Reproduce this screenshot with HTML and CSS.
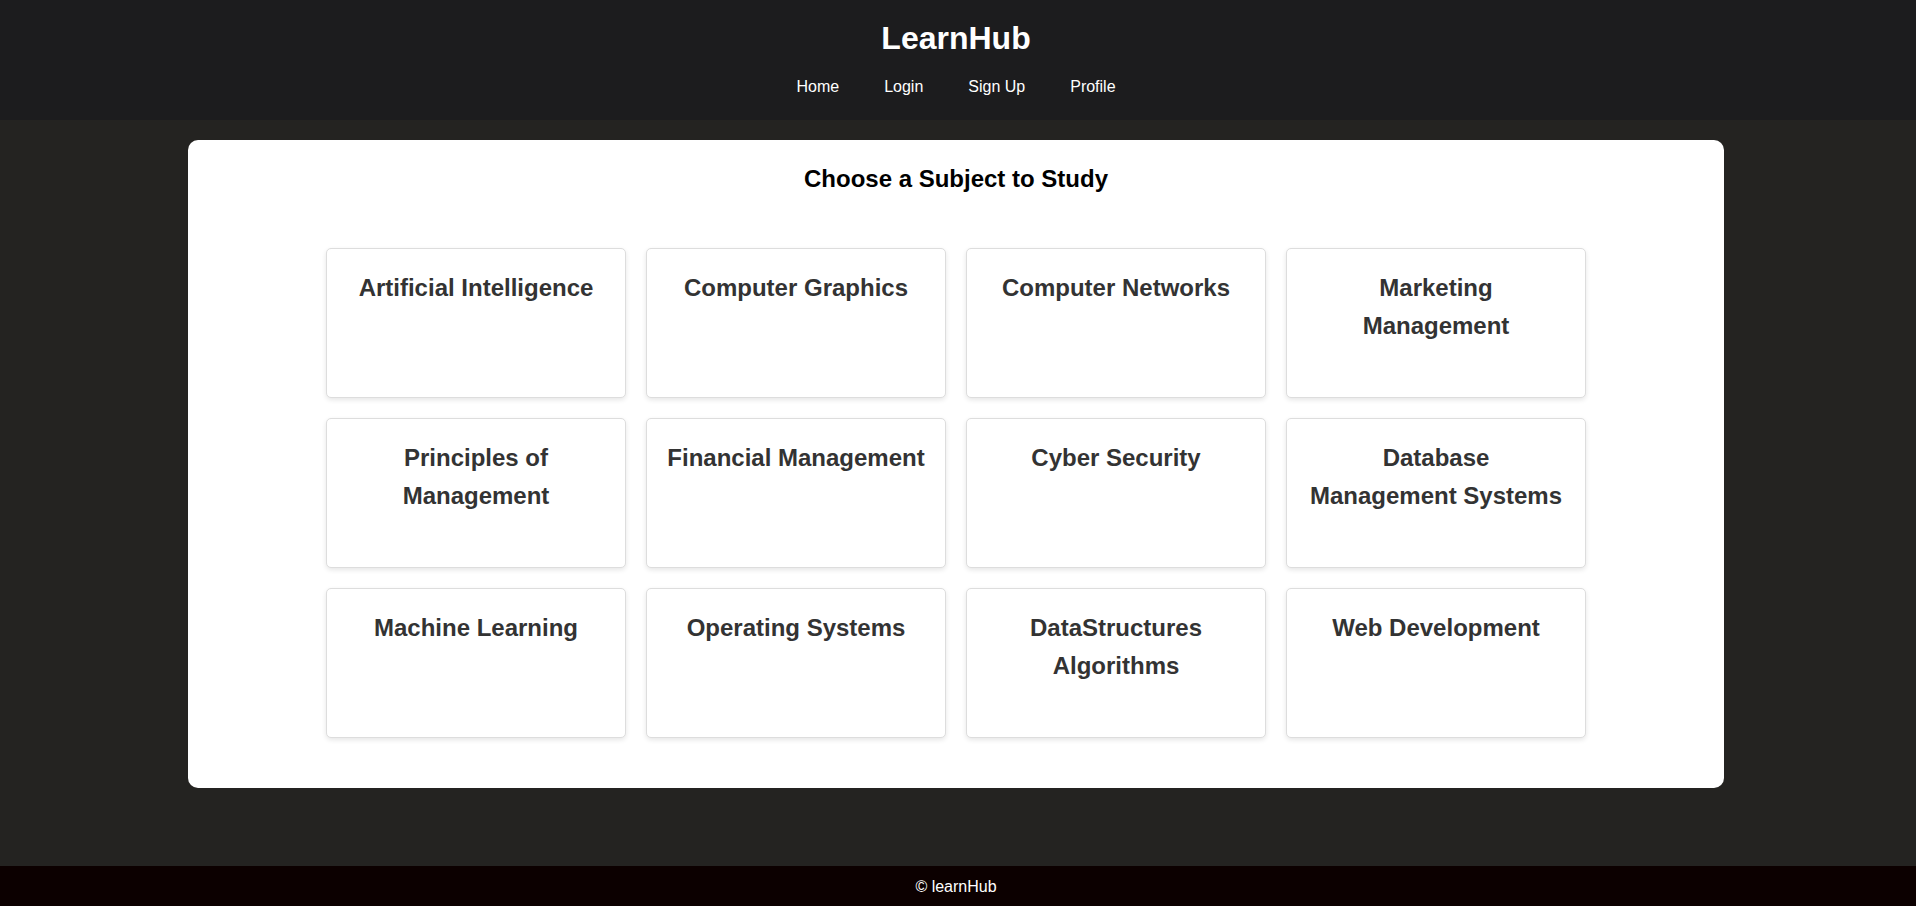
FILE: index.html
```html
<!DOCTYPE html>
<html lang="en">
<head>
<meta charset="utf-8">
<title>LearnHub</title>
<link rel="stylesheet" href="styles.css">
</head>
<body>
<header class="site-header">
  <h1 class="brand">LearnHub</h1>
  <nav class="nav">
    <a class="nav-link" href="#">Home</a>
    <a class="nav-link" href="#">Login</a>
    <a class="nav-link" href="#">Sign Up</a>
    <a class="nav-link" href="#">Profile</a>
  </nav>
</header>
<main class="main">
  <section class="panel">
    <h2 class="panel-title">Choose a Subject to Study</h2>
    <div class="subjects">
      <div class="subject"><h3 class="subject-name">Artificial Intelligence</h3></div>
      <div class="subject"><h3 class="subject-name">Computer Graphics</h3></div>
      <div class="subject"><h3 class="subject-name">Computer Networks</h3></div>
      <div class="subject"><h3 class="subject-name">Marketing Management</h3></div>
      <div class="subject"><h3 class="subject-name">Principles of Management</h3></div>
      <div class="subject"><h3 class="subject-name">Financial Management</h3></div>
      <div class="subject"><h3 class="subject-name">Cyber Security</h3></div>
      <div class="subject"><h3 class="subject-name">Database Management Systems</h3></div>
      <div class="subject"><h3 class="subject-name">Machine Learning</h3></div>
      <div class="subject"><h3 class="subject-name">Operating Systems</h3></div>
      <div class="subject"><h3 class="subject-name">DataStructures Algorithms</h3></div>
      <div class="subject"><h3 class="subject-name">Web Development</h3></div>
    </div>
  </section>
</main>
<footer class="site-footer">© learnHub</footer>
</body>
</html>
```

FILE: styles.css
```css
* { box-sizing: border-box; }

body {
  margin: 0;
  padding-right: 4px;
  min-height: 100vh;
  display: flex;
  flex-direction: column;
  background: #242321;
  font-family: "Liberation Sans", Arial, sans-serif;
  color: #fff;
}

.site-header {
  background: #1c1c1e;
  padding: 20px 4px 24px 0;
  margin-right: -4px;
  text-align: center;
}

.brand {
  margin: 0;
  font-size: 32px;
  line-height: 37px;
  font-weight: bold;
  color: #fff;
}

.nav {
  margin-top: 21px;
  display: flex;
  justify-content: center;
  gap: 45px;
  font-size: 16px;
  line-height: 18px;
}

.nav-link {
  color: #fff;
  text-decoration: none;
}

.main {
  flex: 1;
  padding: 20px 0 78px;
}

.panel {
  width: 1536px;
  margin: 0 auto;
  background: #fff;
  border-radius: 10px;
  padding: 25px 0 50px;
}

.panel-title {
  margin: 0 0 55px;
  text-align: center;
  font-size: 24px;
  line-height: 28px;
  font-weight: bold;
  color: #000;
}

.subjects {
  display: grid;
  grid-template-columns: repeat(4, 300px);
  grid-auto-rows: 150px;
  gap: 20px;
  justify-content: center;
}

.subject {
  background: #fff;
  border: 1px solid #ddd;
  border-radius: 5px;
  box-shadow: 0 2px 5px rgba(0, 0, 0, 0.1);
  padding: 20px 19.5px;
  text-align: center;
}

.subject-name {
  margin: 0;
  font-size: 24px;
  line-height: 38.4px;
  font-weight: bold;
  color: #333;
}

.site-footer {
  background: #0c0000;
  color: #fff;
  text-align: center;
  font-size: 16px;
  line-height: 18px;
  padding: 12px 4px 10px 0;
  margin-right: -4px;
}
```
